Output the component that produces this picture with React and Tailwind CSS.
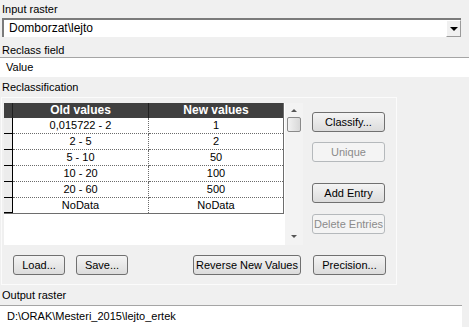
const rows = [
  ["0,015722 - 2", "1"],
  ["2 - 5", "2"],
  ["5 - 10", "50"],
  ["10 - 20", "100"],
  ["20 - 60", "500"],
  ["NoData", "NoData"],
];

function WinButton({ children, className = "", disabled = false }) {
  return (
    <div
      className={
        "flex h-[20px] items-center justify-center rounded-[3px] border text-[11px] " +
        (disabled
          ? "border-[#b5b9bc] bg-[#f4f4f4] text-[#8b8b8b] "
          : "border-[#707070] bg-gradient-to-b from-[#f4f4f4] to-[#dcdcdc] text-black ") +
        className
      }
    >
      {children}
    </div>
  );
}

function Grid() {
  return (
    <div className="flex h-[142px] w-[299px] bg-white">
      <div className="flex w-[280px] flex-col">
        <div className="flex h-[15px] border-r border-[#6d6d6d] bg-[#404040] text-[12px] font-bold leading-[15px] text-white">
          <div className="w-[9px] border-r border-[#202020]" />
          <div className="w-[136px] border-r border-[#202020] text-center">Old values</div>
          <div className="flex-1 text-center">New values</div>
        </div>
        {rows.map(([oldV, newV], i) => (
          <div
            key={i}
            className={
              "flex h-[16px] border-r border-[#6d6d6d] text-[11px] leading-[15px] " +
              (i === rows.length - 1 ? "border-b border-b-[#6d6d6d]" : "")
            }
          >
            <div className="w-[9px] border-r border-b border-black bg-[#ececec]" />
            <div
              className={
                "w-[136px] border-r border-dotted border-[#6a6a6a] text-center " +
                (i === rows.length - 1 ? "" : "border-b")
              }
            >
              {oldV}
            </div>
            <div
              className={
                "flex-1 border-dotted border-[#6a6a6a] text-center " +
                (i === rows.length - 1 ? "" : "border-b")
              }
            >
              {newV}
            </div>
          </div>
        ))}
      </div>
      <div className="ml-[1px] flex w-[18px] flex-col items-center bg-[#f3f3f3] pt-[6px]">
        <div className="h-0 w-0 border-x-[3px] border-b-[3px] border-x-transparent border-b-[#555]" />
        <div className="mt-[5px] h-[15px] w-[14px] rounded-[2px] border border-[#8a8a8a] bg-gradient-to-r from-[#f2f2f2] to-[#d8d8d8]" />
        <div className="flex-1" />
        <div className="mb-[7px] h-0 w-0 border-x-[3px] border-t-[3px] border-x-transparent border-t-[#555]" />
      </div>
    </div>
  );
}

export default function App() {
  return (
    <div
      className="h-[327px] w-[469px] overflow-hidden bg-[#f0f0f0] text-black"
      style={{ fontFamily: '"Liberation Sans", Arial, sans-serif' }}
    >
      <div className="h-[18px] pl-[2px] pt-[2px] text-[11px] leading-[14px]">Input raster</div>
      <div className="ml-[2px] flex h-[19px] w-[459px] border-t-2 border-l-2 border-[#7b7b7b] bg-white">
        <div className="flex-1 pl-[5px] text-[12px] leading-[17px]">Domborzat\lejto</div>
        <div className="flex h-[17px] w-[15px] items-center justify-center border border-[#9a9a9a] border-t-white border-l-white bg-[#f0f0f0]">
          <div className="h-0 w-0 border-x-[4px] border-t-[4px] border-x-transparent border-t-black" />
        </div>
      </div>
      <div className="h-[20px] pl-[2px] pt-[6px] text-[11px] leading-[14px]">Reclass field</div>
      <div className="h-[20px] w-[469px] border-t border-[#a5a5a5] bg-white pl-[6px] text-[11px] leading-[18px]">
        Value
      </div>
      <div className="h-[20px] pl-[2px] pt-[3px] text-[11px] leading-[14px]">Reclassification</div>
      <div className="ml-[1px] flex h-[188px] w-[396px] flex-col border border-[#fbfbfb] pl-[2px] pt-[5px]">
        <div className="flex">
          <Grid />
          <div className="ml-[9px] flex flex-col pt-[9px]">
            <WinButton className="w-[73px]">Classify...</WinButton>
            <WinButton className="mt-[10px] w-[73px]" disabled>
              Unique
            </WinButton>
            <WinButton className="mt-[21px] w-[73px]">Add Entry</WinButton>
            <WinButton className="mt-[11px] w-[73px]" disabled>
              Delete Entries
            </WinButton>
          </div>
        </div>
        <div className="mt-[10px] flex">
          <WinButton className="ml-[9px] w-[52px]">Load...</WinButton>
          <WinButton className="ml-[11px] w-[52px]">Save...</WinButton>
          <WinButton className="ml-[65px] w-[108px]">Reverse New Values</WinButton>
          <WinButton className="ml-[12px] w-[73px]">Precision...</WinButton>
        </div>
      </div>
      <div className="h-[20px] pl-[2px] pt-[3px] text-[11px] leading-[14px]">Output raster</div>
      <div className="h-[22px] w-[462px] border-t border-[#a5a5a5] bg-white pl-[7px] text-[11px] leading-[20px]">
        D:\ORAK\Mesteri_2015\lejto_ertek
      </div>
    </div>
  );
}
